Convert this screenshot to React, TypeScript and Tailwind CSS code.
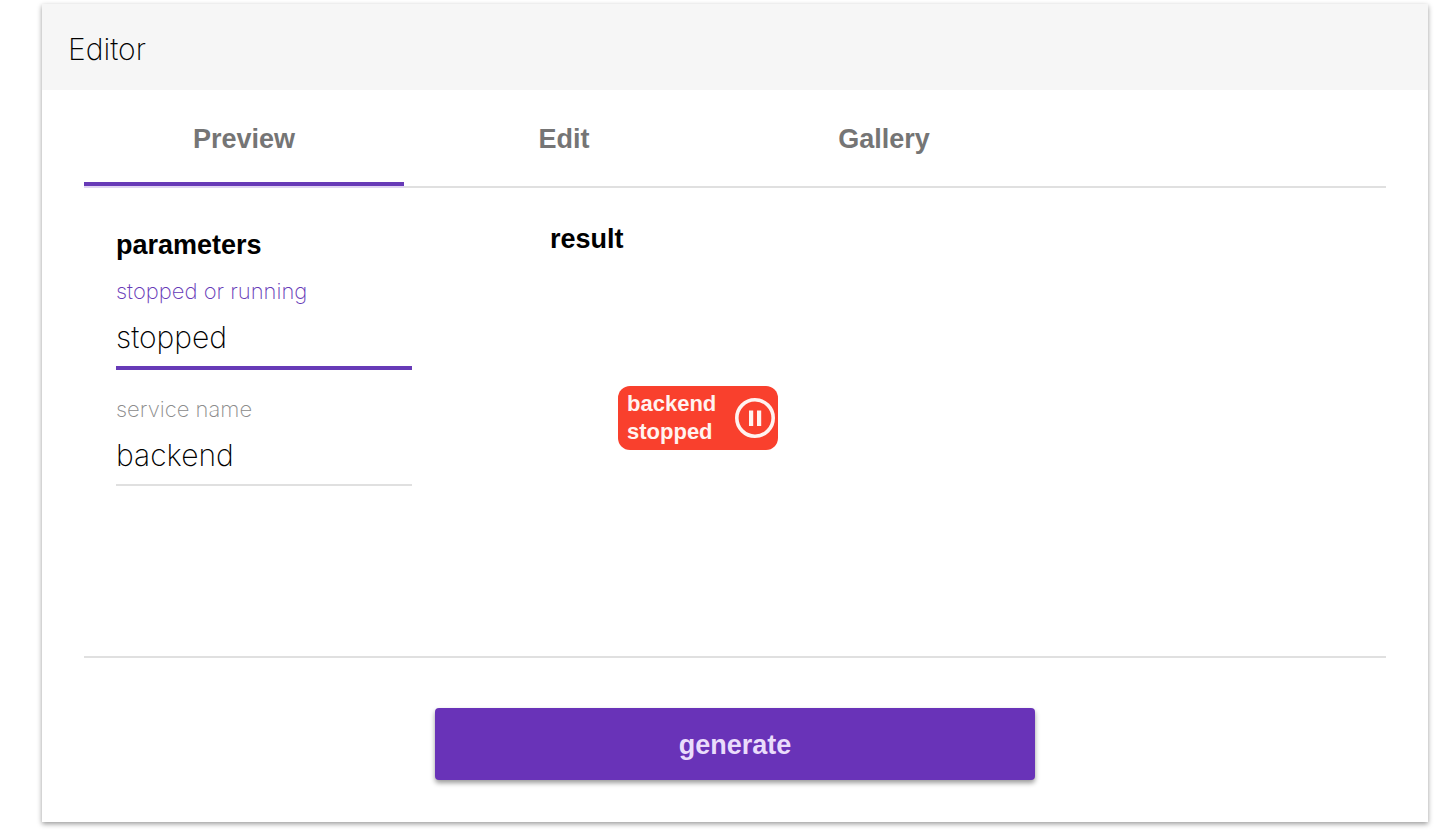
import { useState } from "react";

const tabs = ["Preview", "Edit", "Gallery"];

const PauseIcon = () => (
	<svg viewBox="0 0 40 40" className="size-10 shrink-0" fill="none" aria-hidden="true">
		<circle cx="20" cy="20" r="18.2" stroke="#fff3f0" strokeWidth="3.6" />
		<path d="M14 12.5h4.2v15.5h-4.2zM22 12.5h4.2v15.5h-4.2z" fill="#fff3f0" />
	</svg>
);

const App = () => {
	const [activeTab, setActiveTab] = useState("Preview");
	const [status, setStatus] = useState("stopped");
	const [service, setService] = useState("backend");

	return (
		<div className="bg-white pt-1 pr-3 pb-2.5 pl-[42px] font-['Liberation_Sans',Arial,sans-serif] text-black">
			<main className="bg-white shadow-[0_2px_5px_rgba(0,0,0,0.4)]">
				<header className="flex h-[86px] items-center bg-[#f6f6f6] px-[26px] pt-1">
					<h1 className="font-['Inter',sans-serif] text-[30px] leading-9 font-extralight">
						Editor
					</h1>
				</header>
				<div className="px-[42px] pb-[42px]">
					<div role="tablist" className="flex border-b-2 border-[#e0e0e0]">
						{tabs.map((tab) => (
							<button
								key={tab}
								type="button"
								role="tab"
								aria-selected={activeTab === tab}
								onClick={() => setActiveTab(tab)}
								className={`-mb-0.5 h-[98px] w-80 cursor-pointer border-b-2 pt-0.5 text-[27px] leading-8 font-bold text-[#757575] ${
									activeTab === tab
										? "border-[#e1d5f3] shadow-[inset_0_-4px_0_#673ab7]"
										: "border-transparent"
								}`}
							>
								{tab}
							</button>
						))}
					</div>
					<div className="flex h-[470px] border-b-2 border-[#e0e0e0]">
						<section className="w-[434px] px-8 pt-10">
							<h2 className="text-[27px] leading-[34px] font-bold">parameters</h2>
							<div className="w-[296px] font-['Inter',sans-serif] font-extralight">
								<label
									htmlFor="status"
									className="mt-3.5 block text-[22px] leading-[30px] text-[#673ab7]"
								>
									stopped or running
								</label>
								<input
									id="status"
									value={status}
									onChange={(e) => setStatus(e.target.value)}
									className="block h-16 w-full border-b-4 border-[#673ab7] pt-0.5 text-[30px] outline-none"
								/>
								<label
									htmlFor="service"
									className="mt-6 block text-[22px] leading-[30px] text-[#8c8c8c]"
								>
									service name
								</label>
								<input
									id="service"
									value={service}
									onChange={(e) => setService(e.target.value)}
									className="block h-[62px] w-full border-b-2 border-[#e0e0e0] pt-0.5 text-[30px] outline-none"
								/>
							</div>
						</section>
						<section className="flex-1 px-8 pt-[34px]">
							<h2 className="text-[27px] leading-[34px] font-bold">result</h2>
							<div className="mt-[130px] ml-[68px] flex h-16 w-40 items-center justify-between rounded-xl bg-[#f9402d] pr-[3px] pl-[9px] text-[#fff3f0]">
								<p className="text-[22px] leading-7 font-bold">
									{service}
									<br />
									{status}
								</p>
								<PauseIcon />
							</div>
						</section>
					</div>
					<button
						type="button"
						className="mx-auto mt-[50px] block h-[72px] w-[600px] cursor-pointer rounded bg-[#6933b8] pt-0.5 text-[27px] font-bold text-[#eadcfb] shadow-[0_3px_5px_rgba(0,0,0,0.4)]"
					>
						generate
					</button>
				</div>
			</main>
		</div>
	);
};

export default App;
